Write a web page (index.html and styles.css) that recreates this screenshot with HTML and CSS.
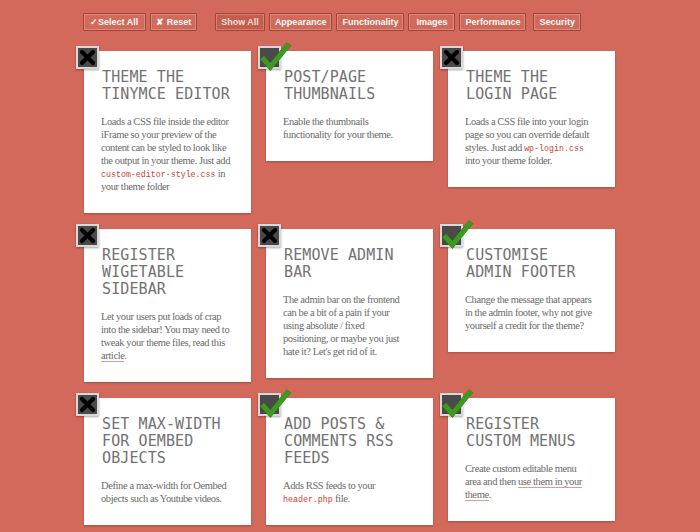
FILE: index.html
```html
<!DOCTYPE html>
<html>
<head>
<meta charset="utf-8">
<link rel="stylesheet" href="styles.css">
</head>
<body>
<div class="toolbar">
  <div class="group">
    <button class="btn wide">✓Select All</button>
    <button class="btn">✘ Reset</button>
  </div>
  <div class="group">
    <button class="btn active">Show All</button>
    <button class="btn">Appearance</button>
    <button class="btn">Functionality</button>
    <button class="btn img">Images</button>
    <button class="btn">Performance</button>
    <button class="btn sec">Security</button>
  </div>
</div>

<div class="grid">
  <div class="card">
    <span class="mark off"><svg viewBox="0 0 19 19"><path d="M4 4 L15 15 M15 4 L4 15" /></svg></span>
    <h2>THEME THE<br>TINYMCE EDITOR</h2>
    <p>Loads a CSS file inside the editor<br>iFrame so your preview of the<br>content can be styled to look like<br>the output in your theme. Just add<br><code>custom-editor-style.css</code> in<br>your theme folder</p>
  </div>
  <div class="card">
    <span class="mark on"><svg viewBox="0 0 32 30"><path d="M3 16 L11 25 L29 3" /></svg></span>
    <h2>POST/PAGE<br>THUMBNAILS</h2>
    <p>Enable the thumbnails<br>functionality for your theme.</p>
  </div>
  <div class="card">
    <span class="mark off"><svg viewBox="0 0 19 19"><path d="M4 4 L15 15 M15 4 L4 15" /></svg></span>
    <h2>THEME THE<br>LOGIN PAGE</h2>
    <p>Loads a CSS file into your login<br>page so you can override default<br>styles. Just add <code>wp-login.css</code><br>into your theme folder.</p>
  </div>

  <div class="card">
    <span class="mark off"><svg viewBox="0 0 19 19"><path d="M4 4 L15 15 M15 4 L4 15" /></svg></span>
    <h2>REGISTER<br>WIGETABLE<br>SIDEBAR</h2>
    <p>Let your users put loads of crap<br>into the sidebar! You may need to<br>tweak your theme files, read this<br><a href="#">article</a>.</p>
  </div>
  <div class="card">
    <span class="mark off"><svg viewBox="0 0 19 19"><path d="M4 4 L15 15 M15 4 L4 15" /></svg></span>
    <h2>REMOVE ADMIN<br>BAR</h2>
    <p>The admin bar on the frontend<br>can be a bit of a pain if your<br>using absolute / fixed<br>positioning, or maybe you just<br>hate it? Let's get rid of it.</p>
  </div>
  <div class="card">
    <span class="mark on"><svg viewBox="0 0 32 30"><path d="M3 16 L11 25 L29 3" /></svg></span>
    <h2>CUSTOMISE<br>ADMIN FOOTER</h2>
    <p>Change the message that appears<br>in the admin footer, why not give<br>yourself a credit for the theme?</p>
  </div>

  <div class="card">
    <span class="mark off"><svg viewBox="0 0 19 19"><path d="M4 4 L15 15 M15 4 L4 15" /></svg></span>
    <h2>SET MAX-WIDTH<br>FOR OEMBED<br>OBJECTS</h2>
    <p>Define a max-width for Oembed<br>objects such as Youtube videos.</p>
  </div>
  <div class="card">
    <span class="mark on"><svg viewBox="0 0 32 30"><path d="M3 16 L11 25 L29 3" /></svg></span>
    <h2>ADD POSTS &amp;<br>COMMENTS RSS<br>FEEDS</h2>
    <p>Adds RSS feeds to your<br><code>header.php</code> file.</p>
  </div>
  <div class="card">
    <span class="mark on"><svg viewBox="0 0 32 30"><path d="M3 16 L11 25 L29 3" /></svg></span>
    <h2>REGISTER<br>CUSTOM MENUS</h2>
    <p>Create custom editable menu<br>area and then <a href="#">use them in your<br>theme</a>.</p>
  </div>
</div>
</body>
</html>
```

FILE: styles.css
```css
html, body {
  margin: 0;
  padding: 0;
  background: #d3695a;
  height: 100%;
  overflow: hidden;
}

.toolbar {
  display: flex;
  gap: 18px;
  padding: 13px 0 0 83px;
}

.group {
  display: flex;
  gap: 4px;
}

.btn {
  height: 18px;
  margin: 0;
  padding: 0 5px;
  border: 1px solid #a3443a;
  border-radius: 1px;
  box-shadow: inset 0 0 0 1px rgba(255, 255, 255, 0.22);
  background: #d16a5a;
  color: #fff;
  font: bold 9px/16px "Liberation Sans", Arial, sans-serif;
  text-shadow: 0 0 1px rgba(0, 0, 0, 0.15);
}

.btn.wide {
  padding: 0 7px 0 6px;
}

.btn.img {
  padding: 0 7px;
}

.btn.active {
  background: #c65c4e;
  color: #f6e3df;
}

.btn.sec {
  margin-left: 3px;
}

.grid {
  display: grid;
  grid-template-columns: 167px 167px 167px;
  column-gap: 15px;
  row-gap: 16px;
  align-items: start;
  margin: 20px 0 0 84px;
}

.card {
  position: relative;
  background: #fff;
  padding: 18px 17px 20px 17px;
  box-shadow: 0 1px 2px rgba(0, 0, 0, 0.25);
}

.mark {
  position: absolute;
  left: -8px;
  top: -5px;
  width: 19px;
  height: 19px;
  background: #4a4a4a;
  border: 2px solid #d8d8d8;
  box-shadow: 0 1px 2px rgba(0, 0, 0, 0.35);
}

.mark svg {
  display: block;
  fill: none;
}

.mark.off svg {
  width: 19px;
  height: 19px;
}

.mark.off path {
  stroke: #000;
  stroke-width: 4.2;
  stroke-linecap: round;
}

.mark.on svg {
  position: absolute;
  left: -1px;
  top: -7px;
  width: 33px;
  height: 31px;
}

.mark.on path {
  stroke: #3d9a1f;
  stroke-width: 5;
  stroke-linejoin: miter;
  stroke-linecap: butt;
  filter: drop-shadow(0 0 0.6px #1d4d0c);
}

h2 {
  margin: 0 0 0 1px;
  font: normal 15px/17px "DejaVu Sans Mono", monospace;
  letter-spacing: 0.1px;
  color: #727272;
}

p {
  margin: 12px 0 0 0;
  font: 10.5px/13px "Liberation Serif", serif;
  letter-spacing: -0.4px;
  color: #6a6a6a;
  white-space: nowrap;
}

code {
  font: 8.3px "Liberation Mono", monospace;
  letter-spacing: 0;
  color: #d0402f;
}

a {
  color: #6a6a6a;
  text-decoration: none;
  border-bottom: 1px solid #e29a92;
}
```
